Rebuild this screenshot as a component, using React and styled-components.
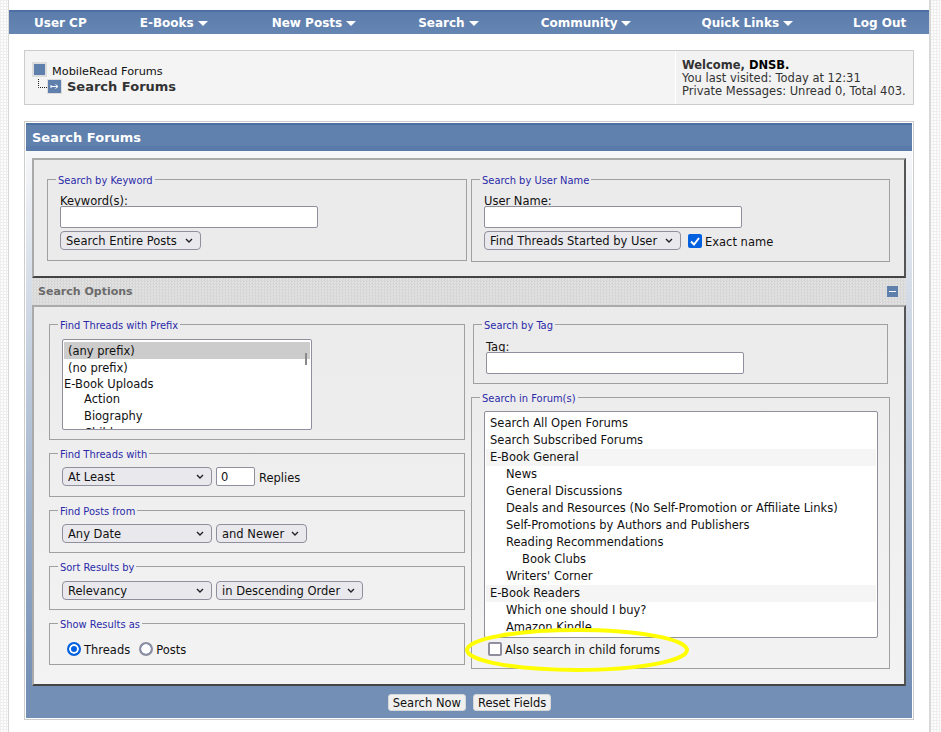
import styled, { createGlobalStyle } from 'styled-components';

const font = '"DejaVu Sans", Verdana, sans-serif';

const GlobalStyle = createGlobalStyle`
  html, body {
    margin: 0;
    padding: 0;
  }
  body {
    height: 732px;
    overflow: hidden;
    font-family: ${font};
    font-size: 11.5px;
    color: #111;
    background-color: #fdfdfd;
    background-image:
      linear-gradient(#efefef 1px, transparent 1px),
      linear-gradient(90deg, #efefef 1px, transparent 1px);
    background-size: 3px 3px;
  }
`;

const Wrapper = styled.div`
  position: relative;
  box-sizing: border-box;
  width: 923px;
  height: 732px;
  margin-left: 8px;
  padding-top: 10px;
  background: #fff;
  border-left: 1px solid #d8d8d8;
  border-right: 2px solid #d8d8d8;
`;

const Nav = styled.nav`
  display: flex;
  height: 24px;
  box-sizing: border-box;
  align-items: center;
  padding: 2px 0 0 25px;
  background: linear-gradient(#4d70a3 0 2px, #5c7cab 2px, #6585b3 100%);
`;

const NavItem = styled.a`
  display: flex;
  align-items: center;
  gap: 4px;
  margin-left: ${(p) => p.$gap}px;
  color: #fff;
  font-size: 12px;
  font-weight: bold;
  white-space: nowrap;
`;

const Caret = styled.span`
  width: 0;
  height: 0;
  border-left: 5px solid transparent;
  border-right: 5px solid transparent;
  border-top: 5px solid #fff;
  margin-top: 1px;
`;

const Breadcrumb = styled.div`
  display: flex;
  height: 55px;
  box-sizing: border-box;
  margin: 16px 15px;
  background: #f4f4f4;
  border: 1px solid #cccccc;
`;

const Trail = styled.div`
  flex: 1;
  display: flex;
  flex-direction: column;
  justify-content: center;
  gap: 2px;
  padding-left: 7px;
`;

const TrailRow = styled.div`
  display: flex;
  align-items: center;
  height: 15px;
`;

const TrailLink = styled.span`
  margin: 4px 0 0 5px;
  font-size: 11.3px;
  line-height: 13px;
`;

const TrailTitle = styled.strong`
  margin-left: 5px;
  font-size: 13px;
  line-height: 15px;
  color: #333;
`;

const SquareIcon = styled.span`
  box-sizing: border-box;
  display: block;
  width: 15px;
  height: 15px;
  background: #5f7fad;
  border: 2px solid #dddddd;
`;

const TreeIcon = styled.svg`
  display: block;
  margin-left: 5px;
`;

const Welcome = styled.div`
  width: 238px;
  box-sizing: border-box;
  padding: 8px 0 0 6px;
  background: #f2f2f2;
  border-left: 1px solid #fff;
  font-size: 11.5px;
  line-height: 13px;
  white-space: nowrap;
  color: #333;
`;

const WelcomeName = styled.strong`
  color: #000;
`;

const Panel = styled.section`
  margin: 0 15px;
  padding: 1px;
  border: 1px solid #cccccc;
  background: #fff;
`;

const TitleBar = styled.h1`
  margin: 0;
  height: 28px;
  line-height: 29px;
  padding-left: 6px;
  box-sizing: border-box;
  color: #fff;
  font-size: 13px;
  font-weight: bold;
  background: linear-gradient(#4d70a3 0 2px, #6080ae 2px 23px, #5a7aaa 23px);
`;

const PanelBody = styled.div`
  padding: 7px 6px 0;
  background: linear-gradient(#f6f7f9, #738fb5 95%);
`;

const KeywordBox = styled.div`
  display: grid;
  grid-template-columns: 420px 419px;
  column-gap: 4px;
  align-items: start;
  height: 120px;
  box-sizing: border-box;
  padding: 13px 0 0 13px;
  border-style: solid;
  border-width: 2px;
  border-color: #aaaaaa #555555 #444444 #aaaaaa;
  background: #ecebec;
`;

const OptionsHeader = styled.div`
  display: flex;
  align-items: center;
  justify-content: space-between;
  height: 27px;
  box-sizing: border-box;
  padding: 0 8px 0 6px;
  color: #6b6b6b;
  font-size: 11px;
  font-weight: bold;
  background-color: #dcdcdc;
  background-image: repeating-conic-gradient(#d6d6d6 0 25%, #e2e2e2 0 50%);
  background-size: 3px 3px;
`;

const CollapseIcon = styled.span`
  display: flex;
  align-items: center;
  justify-content: center;
  width: 11px;
  height: 11px;
  background: #5f7fad;
  &::after {
    content: '';
    width: 7px;
    height: 1px;
    background: #fff;
  }
`;

const OptionsBox = styled.div`
  display: grid;
  grid-template-columns: 416px 419px;
  column-gap: 6px;
  height: 381px;
  box-sizing: border-box;
  padding: 11px 0 0 15px;
  border-style: solid;
  border-width: 2px;
  border-color: #aaaaaa #555555 #444444 #aaaaaa;
  background: linear-gradient(#ecebec, #f3f3f3);
`;

const Column = styled.div`
  display: flex;
  flex-direction: column;
  gap: 7px;
`;

const Group = styled.fieldset`
  margin: 0 ${(p) => p.$inset || 0}px;
  padding: 0 0 0 12px;
  height: ${(p) => p.$height}px;
  box-sizing: border-box;
  border: 1px solid #a0a0a0;
  min-width: 0;
`;

const Legend = styled.legend`
  padding: 2px 2px 0;
  margin-left: -4px;
  color: #2a2aa8;
  font-family: "DejaVu Sans Condensed", "Noto Sans", sans-serif;
  font-size: 11px;
  line-height: 11px;
`;

const FieldLabel = styled.div`
  font-size: 11.5px;
  line-height: 14px;
  margin: ${(p) => p.$top}px 0 -2px;
`;

const TextInput = styled.input`
  display: block;
  position: relative;
  box-sizing: border-box;
  width: 258px;
  height: 22px;
  padding: 0 4px;
  margin: 0;
  background: #fff;
  border: 1px solid #8f8f9d;
  border-radius: 2px;
`;

const NumberInput = styled(TextInput)`
  width: 39px;
  height: 19px;
  font-family: ${font};
  font-size: 11.5px;
  color: #111;
`;

const Select = styled.select`
  appearance: none;
  box-sizing: border-box;
  width: ${(p) => p.$width}px;
  height: 19px;
  margin: 0;
  padding: 1px 0 0 5px;
  font-family: ${font};
  font-size: 11.5px;
  color: #111;
  border: 1px solid #8f8f9d;
  border-radius: 4px;
  background-color: #e9e9ed;
  background-image: url('data:image/svg+xml,<svg xmlns="http://www.w3.org/2000/svg" width="8" height="6"><path d="M1 1l3 3 3-3" fill="none" stroke="%23222" stroke-width="1.4"/></svg>');
  background-repeat: no-repeat;
  background-position: right 7px center;
`;

const Controls = styled.div`
  display: flex;
  align-items: center;
  gap: ${(p) => p.$gap || 4}px;
  margin: ${(p) => p.$top}px 0 0 ${(p) => p.$left || 0}px;
`;

const ControlText = styled.span`
  margin-top: 2px;
`;

const CheckLabel = styled.label`
  display: flex;
  align-items: center;
  gap: 3px;
  font-size: 11.5px;
`;

const Tick = styled.span`
  box-sizing: border-box;
  display: flex;
  width: 14px;
  height: 14px;
  border-radius: 2px;
  background: ${(p) => (p.$on ? '#0060df' : '#fff')};
  border: ${(p) => (p.$on ? 'none' : '2px solid #8f8f9d')};
`;

const Radio = styled.span`
  box-sizing: border-box;
  display: block;
  width: 14px;
  height: 14px;
  border-radius: 50%;
  background: #0060df;
  border: ${(p) => (p.$on ? '2px solid #0060df' : '2px solid #8f8f9d')};
  box-shadow: inset 0 0 0 ${(p) => (p.$on ? '2px' : '6px')} #fff;
`;

const PrefixList = styled.div`
  box-sizing: border-box;
  position: relative;
  width: 250px;
  height: 91px;
  margin-top: 8px;
  padding: 2px 1px 0;
  overflow: hidden;
  background: #fff;
  border: 1px solid #8f8f9d;
  border-radius: 2px;
`;

const PrefixRow = styled.div`
  height: ${(p) => p.$height}px;
  line-height: ${(p) => p.$line}px;
  padding-left: ${(p) => p.$indent}px;
  background: ${(p) => (p.$selected ? '#cccccc' : 'transparent')};
  font-size: 11.5px;
  white-space: nowrap;
`;

const ScrollThumb = styled.span`
  position: absolute;
  top: 13px;
  right: 4px;
  width: 2px;
  height: 12px;
  background: #8a8a8a;
`;

const ForumList = styled.div`
  box-sizing: border-box;
  width: 394px;
  height: 227px;
  margin-top: 7px;
  padding: 3px 1px 0;
  overflow: hidden;
  background: #fff;
  border: 1px solid #8f8f9d;
  border-radius: 2px;
`;

const ForumRow = styled.div`
  height: 17px;
  line-height: 17px;
  padding-left: ${(p) => 4 + p.$depth * 16}px;
  background: ${(p) => (p.$category ? '#f5f5f5' : 'transparent')};
  font-size: 11.5px;
  white-space: nowrap;
`;

const ChildForums = styled(CheckLabel)`
  margin: 3px 0 0 4px;
`;

const FormFooter = styled.div`
  display: flex;
  justify-content: center;
  gap: 7px;
  height: 32px;
  margin: 0 -6px;
  padding: 8px 0 0 1px;
  box-sizing: border-box;
  background: #738fb5;
`;

const Button = styled.button`
  box-sizing: border-box;
  height: 17px;
  padding: 0 4px;
  font-family: ${font};
  font-size: 11.5px;
  color: #111;
  background: #f0f0f0;
  border: 1px solid #d8d8d8;
  border-radius: 3px;
`;

const Highlight = styled.svg`
  position: absolute;
  left: 446px;
  top: 627px;
`;

const navItems = [
  { label: 'User CP', gap: 0 },
  { label: 'E-Books', gap: 53, menu: true },
  { label: 'New Posts', gap: 64, menu: true },
  { label: 'Search', gap: 62, menu: true },
  { label: 'Community', gap: 62, menu: true },
  { label: 'Quick Links', gap: 70, menu: true },
  { label: 'Log Out', gap: 60 },
];

const prefixes = [
  { label: '(any prefix)', indent: 4, height: 17, line: 19, selected: true },
  { label: '(no prefix)', indent: 4, height: 17, line: 19 },
  { label: 'E-Book Uploads', indent: 0, height: 15, line: 17 },
  { label: 'Action', indent: 20, height: 16, line: 16 },
  { label: 'Biography', indent: 20, height: 17, line: 19 },
  { label: 'Children', indent: 20, height: 17, line: 19 },
];

const forums = [
  { label: 'Search All Open Forums', depth: 0 },
  { label: 'Search Subscribed Forums', depth: 0 },
  { label: 'E-Book General', depth: 0, category: true },
  { label: 'News', depth: 1 },
  { label: 'General Discussions', depth: 1 },
  { label: 'Deals and Resources (No Self-Promotion or Affiliate Links)', depth: 1 },
  { label: 'Self-Promotions by Authors and Publishers', depth: 1 },
  { label: 'Reading Recommendations', depth: 1 },
  { label: 'Book Clubs', depth: 2 },
  { label: "Writers' Corner", depth: 1 },
  { label: 'E-Book Readers', depth: 0, category: true },
  { label: 'Which one should I buy?', depth: 1 },
  { label: 'Amazon Kindle', depth: 1 },
];

const App = () => {
  return (
    <Wrapper>
      <GlobalStyle />
      <Nav>
        {navItems.map((item) => (
          <NavItem key={item.label} $gap={item.gap}>
            {item.label}
            {item.menu && <Caret />}
          </NavItem>
        ))}
      </Nav>

      <Breadcrumb>
        <Trail>
          <TrailRow>
            <SquareIcon />
            <TrailLink>MobileRead Forums</TrailLink>
          </TrailRow>
          <TrailRow>
            <TreeIcon width="10" height="15" viewBox="0 0 10 15">
              <path d="M1.5 0v8.5H10" fill="none" stroke="#222" strokeDasharray="1 1" />
            </TreeIcon>
            <svg width="15" height="15" viewBox="0 0 15 15">
              <rect x="0.5" y="0.5" width="14" height="14" fill="#5f7fad" stroke="#ddd" />
              <path d="M4 7.5h7M8.5 5.5l2.5 2-2.5 2M4 6v3" fill="none" stroke="#fff" />
            </svg>
            <TrailTitle>Search Forums</TrailTitle>
          </TrailRow>
        </Trail>
        <Welcome>
          <strong>Welcome, </strong>
          <WelcomeName>DNSB.</WelcomeName>
          <br />
          You last visited: Today at 12:31
          <br />
          Private Messages: Unread 0, Total 403.
        </Welcome>
      </Breadcrumb>

      <Panel>
        <TitleBar>Search Forums</TitleBar>
        <PanelBody>
          <KeywordBox>
            <Group $height={88}>
              <Legend>Search by Keyword</Legend>
              <FieldLabel $top={8}>Keyword(s):</FieldLabel>
              <TextInput />
              <Controls $top={3}>
                <Select $width={141}>
                  <option>Search Entire Posts</option>
                </Select>
              </Controls>
            </Group>
            <Group $height={89}>
              <Legend>Search by User Name</Legend>
              <FieldLabel $top={8}>User Name:</FieldLabel>
              <TextInput />
              <Controls $top={3} $gap={7}>
                <Select $width={197}>
                  <option>Find Threads Started by User</option>
                </Select>
                <CheckLabel>
                  <Tick $on>
                    <svg width="14" height="14" viewBox="0 0 14 14">
                      <path d="M3 7.5l3 3 5-6.5" fill="none" stroke="#fff" strokeWidth="2" />
                    </svg>
                  </Tick>
                  <ControlText>Exact name</ControlText>
                </CheckLabel>
              </Controls>
            </Group>
          </KeywordBox>

          <OptionsHeader>
            Search Options
            <CollapseIcon />
          </OptionsHeader>

          <OptionsBox>
            <Column>
              <Group $height={122}>
                <Legend>Find Threads with Prefix</Legend>
                <PrefixList>
                  {prefixes.map((row) => (
                    <PrefixRow
                      key={row.label}
                      $indent={row.indent}
                      $height={row.height}
                      $line={row.line}
                      $selected={row.selected}
                    >
                      {row.label}
                    </PrefixRow>
                  ))}
                  <ScrollThumb />
                </PrefixList>
              </Group>
              <Group $height={50}>
                <Legend>Find Threads with</Legend>
                <Controls $top={7}>
                  <Select $width={150}>
                    <option>At Least</option>
                  </Select>
                  <NumberInput defaultValue="0" />
                  <ControlText>Replies</ControlText>
                </Controls>
              </Group>
              <Group $height={49}>
                <Legend>Find Posts from</Legend>
                <Controls $top={7}>
                  <Select $width={150}>
                    <option>Any Date</option>
                  </Select>
                  <Select $width={91}>
                    <option>and Newer</option>
                  </Select>
                </Controls>
              </Group>
              <Group $height={50}>
                <Legend>Sort Results by</Legend>
                <Controls $top={8}>
                  <Select $width={150}>
                    <option>Relevancy</option>
                  </Select>
                  <Select $width={147}>
                    <option>in Descending Order</option>
                  </Select>
                </Controls>
              </Group>
              <Group $height={48}>
                <Legend>Show Results as</Legend>
                <Controls $top={11} $gap={9} $left={5}>
                  <CheckLabel>
                    <Radio $on />
                    <ControlText>Threads</ControlText>
                  </CheckLabel>
                  <CheckLabel>
                    <Radio />
                    <ControlText>Posts</ControlText>
                  </CheckLabel>
                </Controls>
              </Group>
            </Column>

            <Column>
              <Group $height={66} $inset={2}>
                <Legend>Search by Tag</Legend>
                <FieldLabel $top={9}>Tag:</FieldLabel>
                <TextInput />
              </Group>
              <Group $height={278}>
                <Legend>Search in Forum(s)</Legend>
                <ForumList>
                  {forums.map((row) => (
                    <ForumRow key={row.label} $depth={row.depth} $category={row.category}>
                      {row.label}
                    </ForumRow>
                  ))}
                </ForumList>
                <ChildForums>
                  <Tick />
                  <ControlText>Also search in child forums</ControlText>
                </ChildForums>
              </Group>
            </Column>
          </OptionsBox>

          <FormFooter>
            <Button>Search Now</Button>
            <Button>Reset Fields</Button>
          </FormFooter>
        </PanelBody>
      </Panel>

      <Highlight width="240" height="46" viewBox="0 0 240 46">
        <ellipse cx="122" cy="23" rx="110" ry="20" fill="none" stroke="#ffff00" strokeWidth="4" />
      </Highlight>
    </Wrapper>
  );
};

export default App;
